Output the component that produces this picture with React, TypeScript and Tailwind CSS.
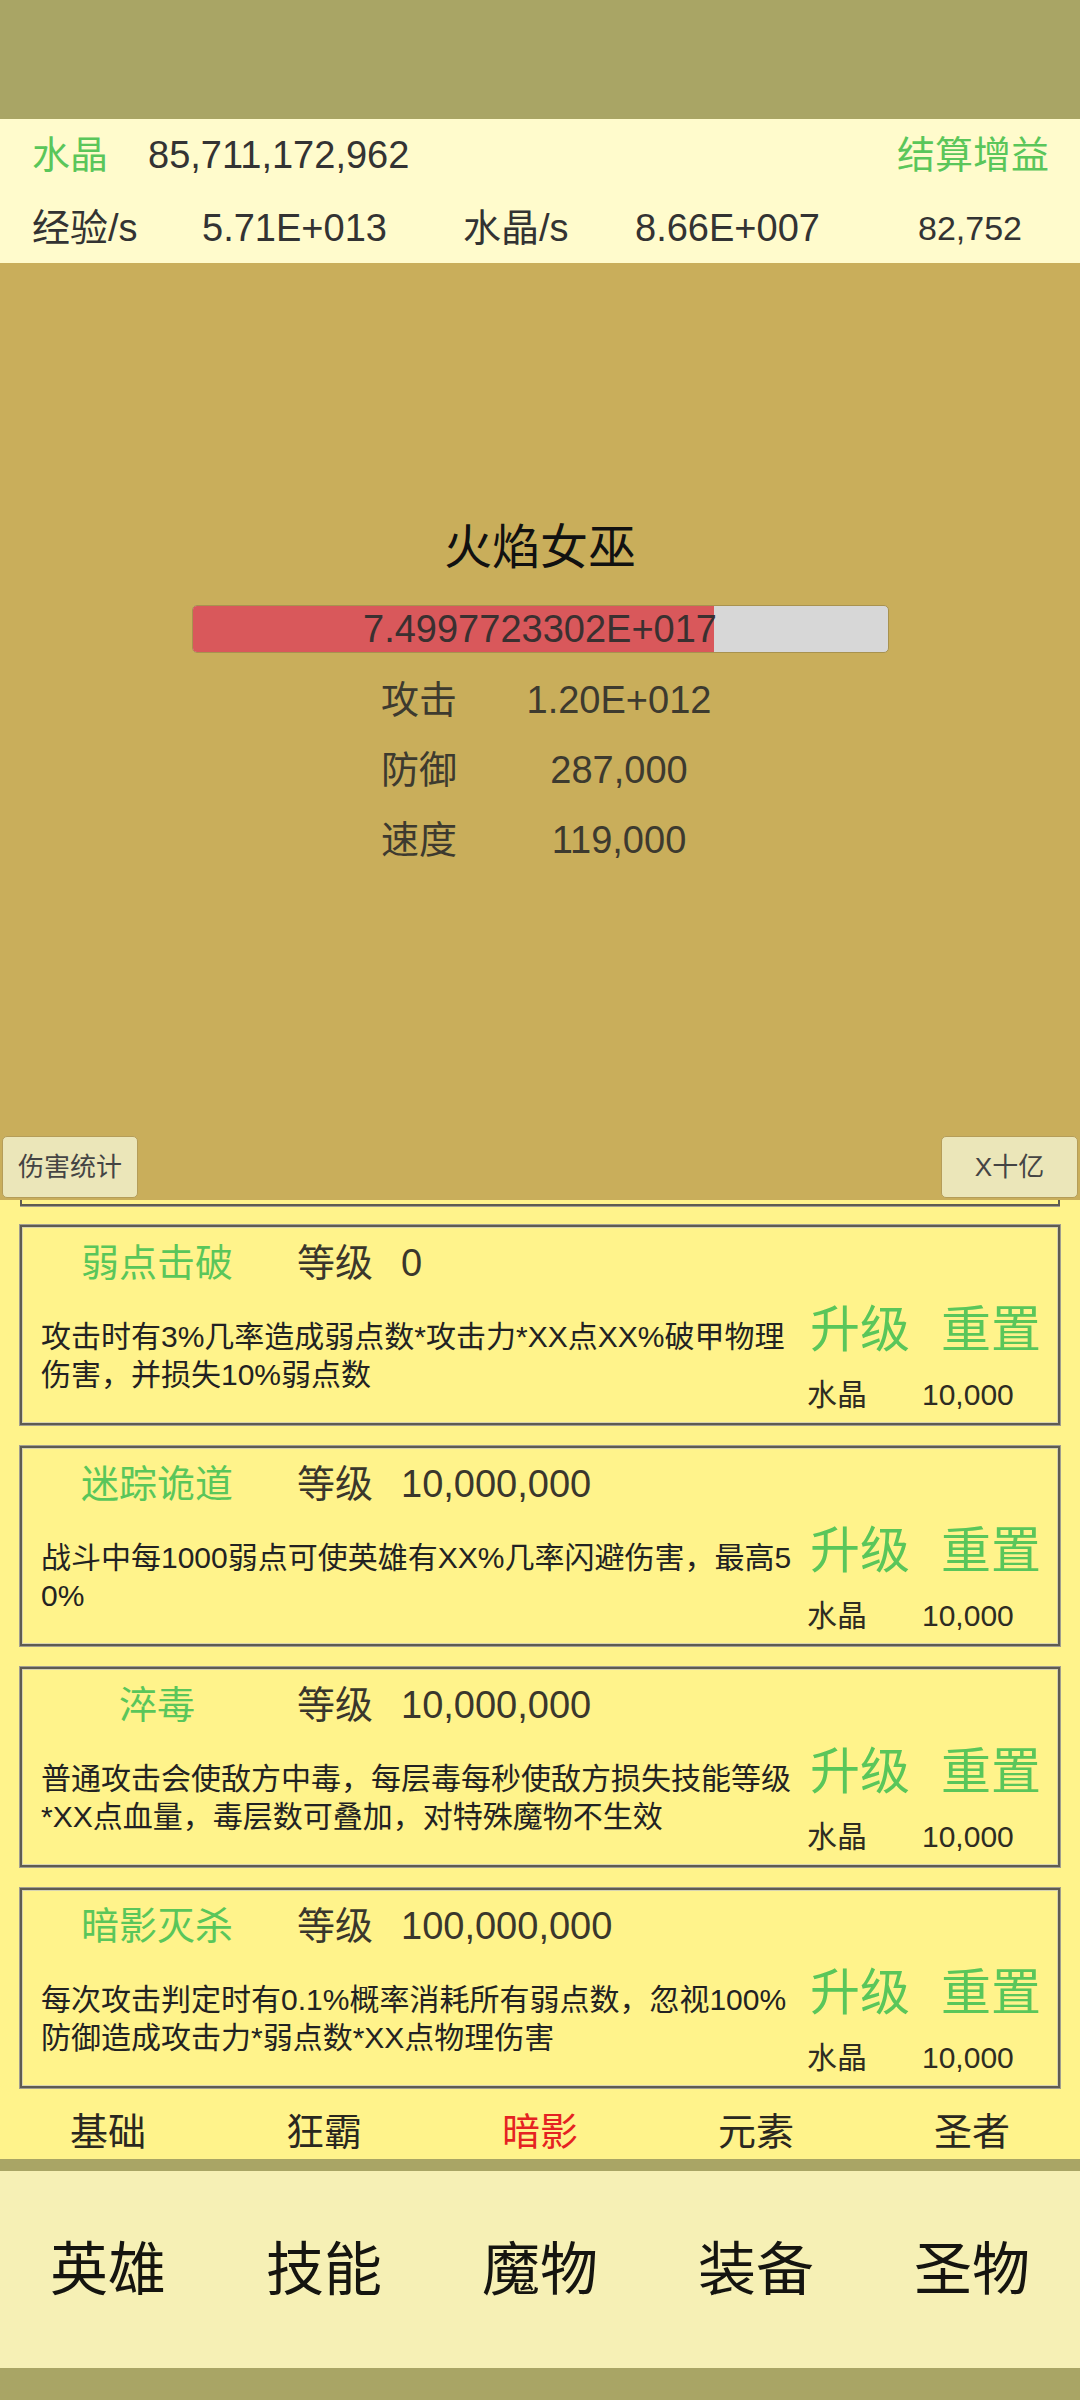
import React from 'react'

const FONT = '"Liberation Sans", "Noto Sans CJK SC", sans-serif'

interface Skill {
  name: string
  level: string
  lines: string[]
}

const skills: Skill[] = [
  {
    name: '弱点击破',
    level: '0',
    lines: ['攻击时有3%几率造成弱点数*攻击力*XX点XX%破甲物理', '伤害，并损失10%弱点数'],
  },
  {
    name: '迷踪诡道',
    level: '10,000,000',
    lines: ['战斗中每1000弱点可使英雄有XX%几率闪避伤害，最高5', '0%'],
  },
  {
    name: '淬毒',
    level: '10,000,000',
    lines: ['普通攻击会使敌方中毒，每层毒每秒使敌方损失技能等级', '*XX点血量，毒层数可叠加，对特殊魔物不生效'],
  },
  {
    name: '暗影灭杀',
    level: '100,000,000',
    lines: ['每次攻击判定时有0.1%概率消耗所有弱点数，忽视100%', '防御造成攻击力*弱点数*XX点物理伤害'],
  },
]

const subTabs = ['基础', '狂霸', '暗影', '元素', '圣者']
const navTabs = ['英雄', '技能', '魔物', '装备', '圣物']

function SkillCard({ skill }: { skill: Skill }) {
  return (
    <div className="h-[200px] mx-[20px] border-2 border-[#5e5b52] outline outline-1 outline-[#a19e90] shadow-[inset_0_0_0_1px_#d6d2b0] bg-[#fff38b] flex flex-col">
      {/* Title row */}
      <div className="flex items-center h-[48px] mt-[12px] text-[38px] leading-[48px]">
        <div className="w-[200px] ml-[35px] text-center text-[#5ac65a]">{skill.name}</div>
        <div className="ml-[40px] text-[#3a372c]">等级</div>
        <div className="ml-[28px] text-[#3a372c]">{skill.level}</div>
      </div>
      {/* Body */}
      <div className="flex">
        <div className="ml-[19px] mt-[31px] w-[767px] text-[30px] leading-[38px] text-[#222] whitespace-nowrap">
          {skill.lines.map((l, i) => (
            <div key={i}>{l}</div>
          ))}
        </div>
        <div className="flex flex-col ml-[2px]">
          <div className="flex mt-[13px] h-[60px] items-center text-[50px] leading-[60px] text-[#5ac65a]">
            <span>升级</span>
            <span className="ml-[31px]">重置</span>
          </div>
          <div className="flex mt-[16px] h-[38px] items-center text-[30px] leading-[38px] text-[#2e2c22]">
            <span className="-ml-[3px]">水晶</span>
            <span className="ml-[55px]">10,000</span>
          </div>
        </div>
      </div>
    </div>
  )
}

export default function App() {
  return (
    <div className="w-[1080px] h-[2400px] flex flex-col bg-[#a9a565]" style={{ fontFamily: FONT }}>
      {/* top strip */}
      <div className="h-[119px] bg-[#a9a565]" />

      {/* Resource header */}
      <div className="h-[144px] bg-[#fffbcc] flex flex-col text-[38px] text-[#333] leading-[46px]">
        <div className="flex items-center h-[46px] mt-[13px] pl-[32px] pr-[31px]">
          <span className="text-[#5ac65a]">水晶</span>
          <span className="ml-[40px]">85,711,172,962</span>
          <span className="ml-auto text-[#5ac65a]">结算增益</span>
        </div>
        <div className="flex items-center h-[46px] mt-[27px] pl-[32px]">
          <span className="w-[170px]">经验/s</span>
          <span className="w-[261px]">5.71E+013</span>
          <span className="w-[172px]">水晶/s</span>
          <span className="w-[283px]">8.66E+007</span>
          <span className="text-[34px]">82,752</span>
        </div>
      </div>

      {/* Monster area */}
      <div className="h-[937px] bg-[#c9ae5b] flex flex-col">
        <div className="mt-[257px] text-center text-[48px] leading-[56px] text-[#111]">火焰女巫</div>
        <div className="mt-[29px] mx-auto w-[697px] h-[48px] relative rounded-[5px] border border-[#a8924f] bg-[#d7d7d7] overflow-hidden">
          <div className="h-full w-[521px] bg-[#d9585b]" />
          <div className="absolute inset-0 flex items-center justify-center text-[38px] text-[#3a3030]">
            7.4997723302E+017
          </div>
        </div>
        <div className="mt-[12px] flex flex-col text-[38px] leading-[70px] text-[#3d3a2f]">
          {[
            ['攻击', '1.20E+012'],
            ['防御', '287,000'],
            ['速度', '119,000'],
          ].map(([k, v]) => (
            <div key={k} className="flex justify-center pl-[8px]">
              <span className="w-[150px] text-center">{k}</span>
              <span className="w-[250px] text-center">{v}</span>
            </div>
          ))}
        </div>
        <div className="mt-auto mb-[2px] px-[2px] flex justify-between">
          <button className="w-[136px] h-[62px] rounded-[5px] border border-[#b59d58] bg-[#ebe6b9] text-[26px] text-[#444]">
            伤害统计
          </button>
          <button className="w-[137px] h-[62px] rounded-[5px] border border-[#b59d58] bg-[#ebe6b9] text-[26px] text-[#444]">
            X十亿
          </button>
        </div>
      </div>

      {/* Skill list */}
      <div className="h-[899px] bg-[#fff38b] overflow-hidden flex flex-col">
        <div className="h-[6px] mx-[20px] border-x-2 border-b-2 border-[#5e5b52] shadow-[0_1px_0_#a19e90]" />
        <div className="mt-[19px] flex flex-col gap-[21px]">
          {skills.map((s) => (
            <SkillCard key={s.name} skill={s} />
          ))}
        </div>
      </div>

      {/* Sub tabs */}
      <div className="h-[60px] bg-[#fff38b] grid grid-cols-5 items-center text-[38px] leading-[46px] text-[#2a281f] pt-[6px]">
        {subTabs.map((t) => (
          <div key={t} className={t === '暗影' ? 'text-center text-[#e52222]' : 'text-center'}>
            {t}
          </div>
        ))}
      </div>

      <div className="h-[12px] bg-[#a9a565]" />

      {/* Bottom nav */}
      <div className="h-[197px] bg-[#f6f0b5] grid grid-cols-5 items-center text-[58px] leading-[70px] text-[#151510]">
        {navTabs.map((t) => (
          <div key={t} className="text-center">
            {t}
          </div>
        ))}
      </div>

      <div className="flex-1 bg-[#a9a565]" />
    </div>
  )
}
